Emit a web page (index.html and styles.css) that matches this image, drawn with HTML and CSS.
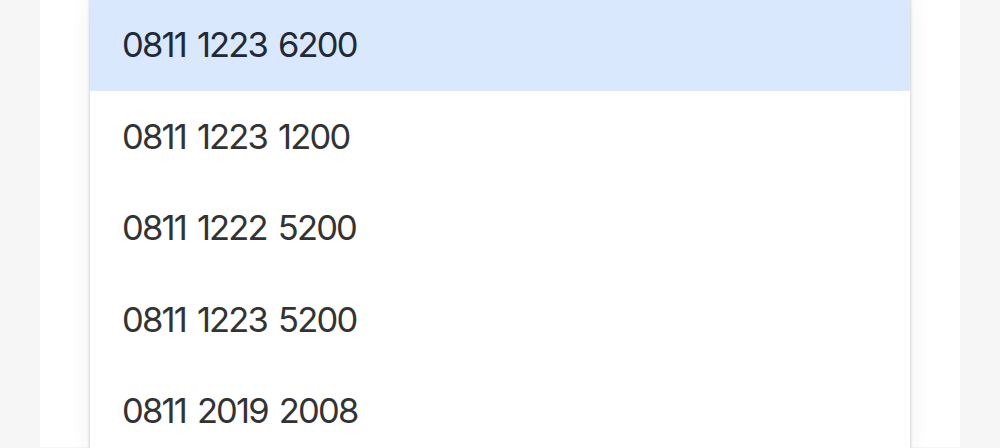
FILE: index.html
```html
<!DOCTYPE html>
<html><head><meta charset="utf-8"><link rel="stylesheet" href="styles.css"></head>
<body>
<div class="page">
  <div class="panel">
    <div class="row sel">0811 1223 6200</div>
    <div class="row">0811 1223 1200</div>
    <div class="row">0811 1222 5200</div>
    <div class="row">0811 1223 5200</div>
    <div class="row">0811 2019 2008</div>
  </div>
</div>
</body></html>
```
FILE: styles.css
```css
html,body{margin:0;height:100%;}
body{background:#f6f6f6;overflow:hidden;}
.page{margin:0 40px;background:#fff;height:100%;padding:0 50px;}
.panel{background:#fff;margin-top:-1px;box-shadow:0 0 3px rgba(0,0,0,.25),0 0 24px rgba(0,0,0,.06);}
.row{height:91.5px;display:flex;align-items:center;padding-left:32px;color:#333;font-family:Inter,"Noto Sans",sans-serif;font-variant-numeric:proportional-nums;font-size:34.5px;letter-spacing:-1.8px;word-spacing:3px;}
.sel{background:#d9e8fc;color:#1f2937;}
```
